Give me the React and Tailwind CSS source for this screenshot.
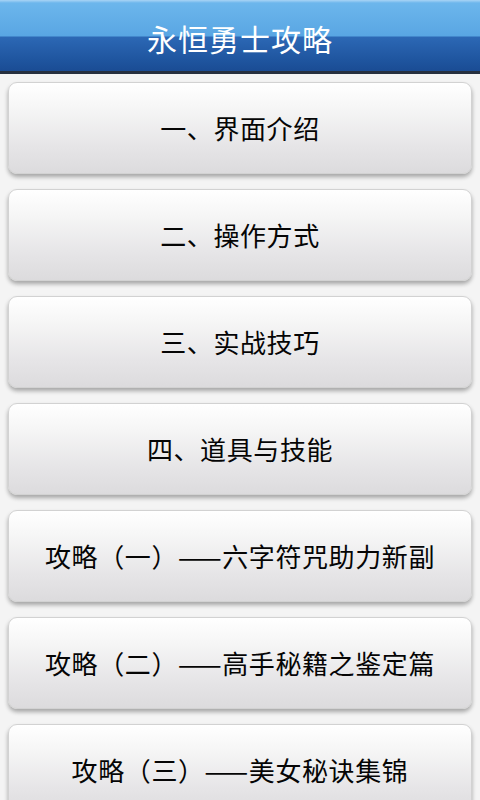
const items = [
  '一、界面介绍',
  '二、操作方式',
  '三、实战技巧',
  '四、道具与技能',
  '攻略（一）——六字符咒助力新副',
  '攻略（二）——高手秘籍之鉴定篇',
  '攻略（三）——美女秘诀集锦',
];

export default function App() {
  return (
    <div
      className="w-[480px] h-[800px] overflow-hidden bg-[#f4f4f4]"
      style={{ fontFamily: '"Noto Sans CJK SC", "Noto Sans", sans-serif' }}
    >
      {/* Title bar */}
      <div className="relative h-[74px] border-b-[3px] border-[#26303f] bg-[linear-gradient(to_bottom,#a9d4f5_0px,#6cb6ec_3px,#59a6e3_36px,#2c68b5_37px,#1f559f_60px,#1a4c94_71px)] flex items-center justify-center">
        <span className="text-white text-[30px] leading-none tracking-[1px] pt-[4px]">永恒勇士攻略</span>
      </div>

      {/* Menu buttons */}
      <div className="flex flex-col gap-[15px] px-[8px] pt-[8px]">
        {items.map((label) => (
          <button
            key={label}
            className="h-[92px] shrink-0 w-full rounded-[9px] border border-[#d2d2d2] bg-[linear-gradient(to_bottom,#ffffff_0%,#f5f5f5_30%,#e6e5e7_70%,#dcdbdd_100%)] shadow-[0_3px_4px_rgba(0,0,0,0.32),inset_0_1px_0_#ffffff] flex items-center justify-center text-[26px] tracking-[0.6px] text-[#050505] leading-none"
          >
            {label}
          </button>
        ))}
      </div>
    </div>
  );
}
